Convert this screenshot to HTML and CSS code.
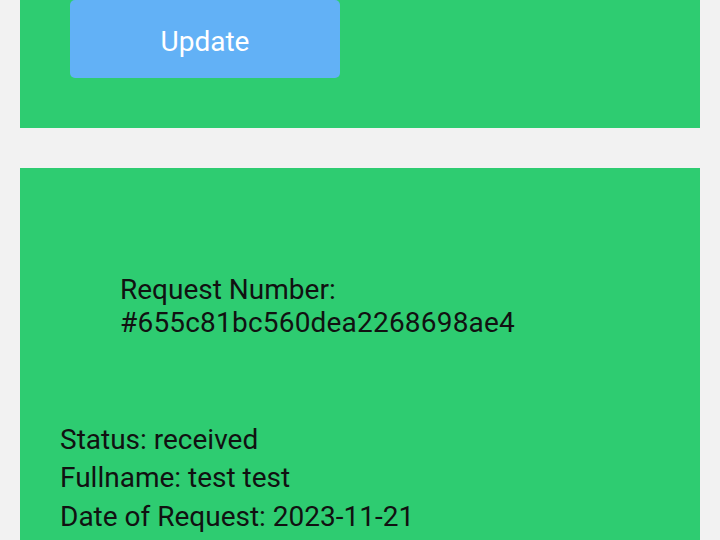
FILE: index.html
```html
<!DOCTYPE html>
<html lang="en">
<head>
<meta charset="utf-8">
<title>Requests</title>
<link rel="stylesheet" href="styles.css">
</head>
<body>
<main class="page">
  <section class="card card-top">
    <button class="btn-update" type="button">Update</button>
  </section>
  <section class="card card-request">
    <h2 class="req-number">
      <span class="req-label">Request Number:</span>
      <span class="req-id">#655c81bc560dea2268698ae4</span>
    </h2>
    <div class="req-info">
      <p class="info-line">Status: received</p>
      <p class="info-line">Fullname: test test</p>
      <p class="info-line">Date of Request: 2023-11-21</p>
    </div>
  </section>
</main>
</body>
</html>
```
FILE: styles.css
```css
html, body {
  margin: 0;
  padding: 0;
  background: #f2f2f2;
  font-family: Roboto, "Liberation Sans", sans-serif;
  color: #111;
}
.page {
  display: flex;
  flex-direction: column;
  gap: 40px;
  padding: 0 20px;
}
.card {
  background: #2ecc71;
}
.card-top {
  padding: 0 0 50px 50px;
}
.btn-update {
  display: block;
  width: 270px;
  height: 78px;
  border: none;
  border-radius: 5px;
  background: #62b1f6;
  color: #fff;
  font-family: Roboto, "Liberation Sans", sans-serif;
  font-size: 28px;
  padding: 4px 0 0 0;
}
.card-request {
  padding: 106px 40px 40px 40px;
  min-height: 420px;
}
.req-number {
  margin: 0 0 0 60px;
  font-size: 28px;
  font-weight: 400;
  line-height: 32.5px;
}
.req-label, .req-id {
  display: block;
}
.req-id {
  letter-spacing: 0.2px;
}
.req-info {
  margin-top: 82px;
}
.info-line {
  margin: 0;
  font-size: 28px;
  line-height: 38.3px;
}
```
